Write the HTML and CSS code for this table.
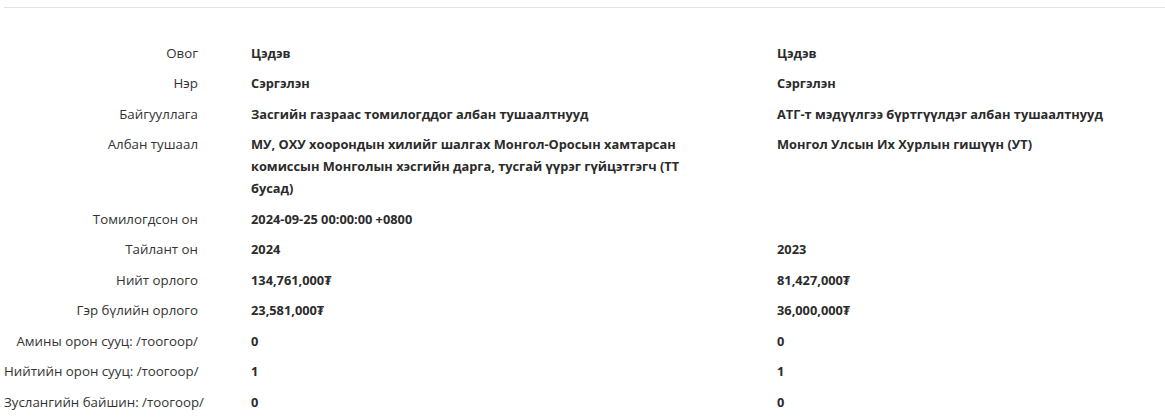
FILE: index.html
```html
<!DOCTYPE html>
<html lang="mn">
<head>
<meta charset="utf-8">
<link rel="stylesheet" href="styles.css">
</head>
<body>
<div class="panel">
  <div class="grid">
    <div class="lbl">Овог</div><div class="val">Цэдэв</div><div class="val">Цэдэв</div>
    <div class="lbl">Нэр</div><div class="val">Сэргэлэн</div><div class="val">Сэргэлэн</div>
    <div class="lbl">Байгууллага</div><div class="val">Засгийн газраас томилогддог албан тушаалтнууд</div><div class="val">АТГ-т мэдүүлгээ бүртгүүлдэг албан тушаалтнууд</div>
    <div class="lbl">Албан тушаал</div><div class="val">МУ, ОХУ хоорондын хилийг шалгах Монгол-Оросын хамтарсан комиссын Монголын хэсгийн дарга, тусгай үүрэг гүйцэтгэгч (ТТ бусад)</div><div class="val">Монгол Улсын Их Хурлын гишүүн (УТ)</div>
    <div class="lbl">Томилогдсон он</div><div class="val">2024-09-25 00:00:00 +0800</div><div class="val"></div>
    <div class="lbl">Тайлант он</div><div class="val">2024</div><div class="val">2023</div>
    <div class="lbl">Нийт орлого</div><div class="val">134,761,000₮</div><div class="val">81,427,000₮</div>
    <div class="lbl">Гэр бүлийн орлого</div><div class="val">23,581,000₮</div><div class="val">36,000,000₮</div>
    <div class="lbl">Амины орон сууц: /тоогоор/</div><div class="val">0</div><div class="val">0</div>
    <div class="lbl">Нийтийн орон сууц: /тоогоор/</div><div class="val">1</div><div class="val">1</div>
    <div class="lbl">Зуслангийн байшин: /тоогоор/</div><div class="val">0</div><div class="val">0</div>
  </div>
</div>
</body>
</html>
```
FILE: styles.css
```css
html, body {
  margin: 0;
  padding: 0;
  background: #fff;
}
body {
  font-family: "Open Sans", "Noto Sans", "DejaVu Sans", sans-serif;
  font-size: 13px;
  color: #333;
}
.panel {
  margin: 7px 0 0 4px;
  border-top: 1px solid #e3e3e3;
  padding-top: 29.5px;
}
.grid {
  display: grid;
  grid-template-columns: 194px 473px 1fr;
  column-gap: 53px;
}
.lbl, .val {
  line-height: 22px;
  padding: 4.25px 0;
}
.lbl {
  font-size: 13.3px;
  text-align: right;
  white-space: nowrap;
}
.val {
  font-size: 12.8px;
  font-weight: 700;
  color: #2b2b2b;
}
```
